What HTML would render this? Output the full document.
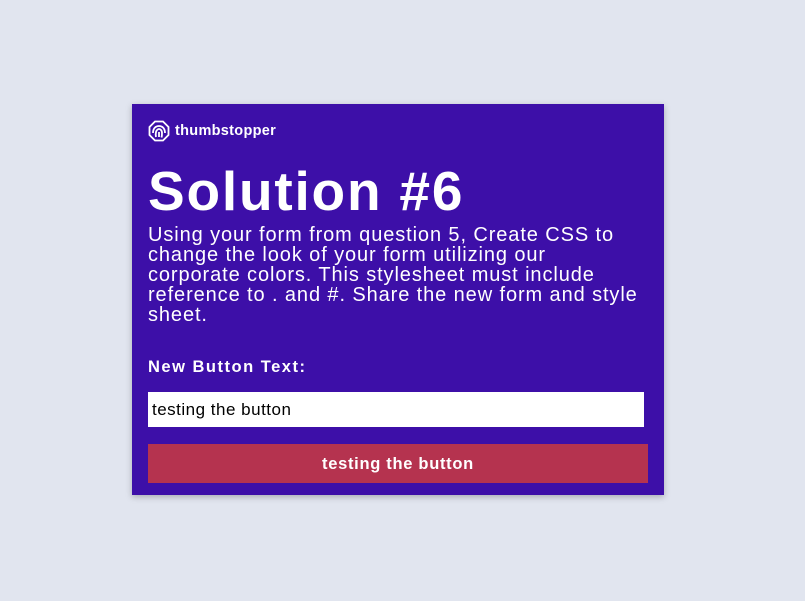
<!DOCTYPE html>
<html><head><style>
html,body{margin:0;padding:0;background:#e1e5ef;width:805px;height:601px;overflow:hidden;font-family:"Liberation Sans",sans-serif;}
.card{position:absolute;left:132px;top:104px;width:532px;height:391px;background:#3d0fa8;box-shadow:0 2px 6px rgba(0,0,0,0.25);}
.logo{position:absolute;left:16px;top:16px;height:22px;display:flex;align-items:center;color:#fff;font-weight:bold;font-size:14.5px;}
.logo span{margin-left:5px;letter-spacing:0.3px}
h1{position:absolute;left:16px;top:56px;margin:0;color:#fff;font-size:55px;font-weight:bold;letter-spacing:1.8px;line-height:62px;}
.p{position:absolute;left:16px;top:121px;color:#fff;font-size:20px;line-height:20px;letter-spacing:0.9px;white-space:nowrap;}
.lbl{position:absolute;left:16px;top:254px;color:#fff;font-weight:bold;font-size:16.5px;letter-spacing:1.5px}
.inp{position:absolute;left:16px;top:288px;width:496px;height:35px;background:#fff;box-sizing:border-box;padding-left:4px;line-height:35px;font-size:17px;letter-spacing:0.5px;color:#000}
.btn{position:absolute;left:16px;top:340px;width:500px;height:39px;background:#b5334f;color:#fff;font-weight:bold;font-size:16.5px;letter-spacing:0.7px;text-align:center;line-height:41px}
</style></head><body>
<div class="card">
<div class="logo"><svg width="22" height="22" viewBox="0 0 22 22" fill="none" stroke="#fff" stroke-width="1.8"><path d="M7 1.5h8l5.5 5.5v8L15 20.5H7L1.5 15V7z"/><path d="M5 13c0-5 3-7 6-7s6 2 6 7" /><path d="M8 17c-.5-2-.5-3 0-5 .5-2 2-3 3-3s3 1 3 4c0 2 0 3-.5 4.5"/><path d="M11 12v5"/></svg><span>thumbstopper</span></div>
<h1>Solution #6</h1>
<div class="p">Using your form from question 5, Create CSS to<br>change the look of your form utilizing our<br>corporate colors. This stylesheet must include<br>reference to . and #. Share the new form and style<br>sheet.</div>
<div class="lbl">New Button Text:</div>
<div class="inp">testing the button</div>
<div class="btn">testing the button</div>
</div>
</body></html>
